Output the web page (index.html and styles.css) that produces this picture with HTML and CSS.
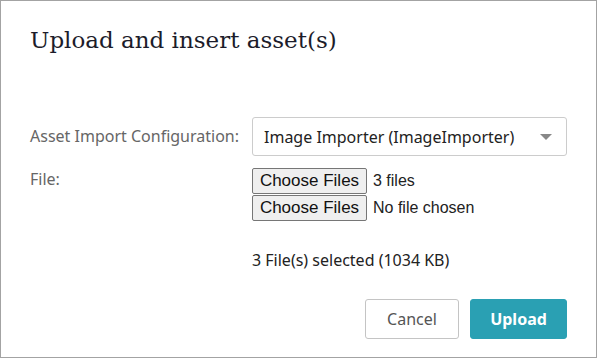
FILE: index.html
```html
<!DOCTYPE html>
<html lang="en">
<head>
    <meta charset="UTF-8">
    <title>Upload and insert asset(s)</title>
    <link rel="stylesheet" href="styles.css">
</head>
<body>

    <div class="dialog">
        <h1 class="dialog-title">Upload and insert asset(s)</h1>

        <form class="upload-form">
            <div class="form-row">
                <label class="form-label">Asset Import Configuration:</label>
                <div class="select-box">
                    <span>Image Importer (ImageImporter)</span>
                    <span class="caret"></span>
                </div>
            </div>

            <div class="form-row">
                <label class="form-label">File:</label>
                <div class="file-list">
                    <div class="file-input">
                        <button type="button" class="file-btn">Choose Files</button>
                        <span>3 files</span>
                    </div>
                    <div class="file-input">
                        <button type="button" class="file-btn">Choose Files</button>
                        <span>No file chosen</span>
                    </div>
                    <p class="file-summary">3 File(s) selected (1034 KB)</p>
                </div>
            </div>
        </form>

        <div class="dialog-actions">
            <button type="button" class="btn btn-cancel">Cancel</button>
            <button type="button" class="btn btn-upload">Upload</button>
        </div>
    </div>

</body>
</html>
```

FILE: styles.css
```css
/* Umum */
body {
    margin: 0;
    padding: 0;
    background: white;
    font-family: 'Noto Sans', sans-serif;
    font-size: 16px;
    color: #222;
}

.dialog {
    box-sizing: border-box;
    width: 597px;
    height: 358px;
    border: 1px solid #a3a3a3;
    padding: 0 29px 0 29px;
}

.dialog-title {
    font-family: 'DejaVu Serif', serif;
    font-weight: normal;
    font-size: 23px;
    color: #1c1c2a;
    margin: 25px 0 0 0;
    line-height: 28px;
}

/* Form */
.upload-form {
    margin-top: 63px;
}

.form-row {
    display: grid;
    grid-template-columns: 222px 1fr;
    margin-bottom: 11px;
}

.form-label {
    color: #666;
    line-height: 38px;
}

.select-box {
    display: flex;
    align-items: center;
    justify-content: space-between;
    height: 37px;
    border: 1px solid #ccc;
    border-radius: 3px;
    padding: 0 14px 0 11px;
}

.caret {
    width: 0;
    height: 0;
    border-left: 6px solid transparent;
    border-right: 6px solid transparent;
    border-top: 6px solid #888;
}

.form-row:nth-child(2) .form-label {
    line-height: 24px;
}

.file-input {
    display: flex;
    align-items: center;
    gap: 6px;
    height: 27px;
    font-family: 'Liberation Sans', Arial, sans-serif;
    font-size: 16px;
}

.file-btn {
    font-family: 'Liberation Sans', Arial, sans-serif;
    font-size: 17px;
    color: #111;
    background: #efefef;
    border: 1px solid #767676;
    border-radius: 2px;
    padding: 0;
    height: 26px;
    width: 115px;
    white-space: nowrap;
    flex-shrink: 0;
}

.file-summary {
    margin: 27px 0 0 0;
    line-height: 24px;
}

/* Tombol */
.dialog-actions {
    display: flex;
    justify-content: flex-end;
    gap: 11px;
    margin-top: 27px;
}

.btn {
    font-family: 'Noto Sans', sans-serif;
    font-size: 16px;
    height: 40px;
    border-radius: 3px;
    padding: 0;
}

.btn-cancel {
    background: white;
    color: #555;
    border: 1px solid #c4c4c4;
    width: 94px;
}

.btn-upload {
    background: #2aa0b3;
    color: white;
    border: 1px solid #2aa0b3;
    font-weight: bold;
    width: 97px;
}
```
